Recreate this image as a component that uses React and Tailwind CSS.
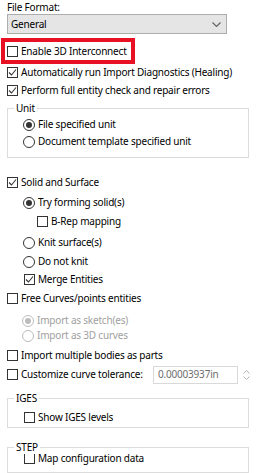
import React from 'react';

function Check({ checked }) {
  return (
    <span className="w-[11px] h-[11px] shrink-0 border border-[#333] bg-white flex items-center justify-center">
      {checked && (
        <svg width="9" height="9" viewBox="0 0 9 9">
          <polyline points="1,4.5 3.5,7 8,1.5" fill="none" stroke="#333" strokeWidth="1.1" />
        </svg>
      )}
    </span>
  );
}

function Radio({ checked, disabled }) {
  const c = disabled ? '#bcbcbc' : '#333';
  return (
    <svg width="12" height="12" viewBox="0 0 12 12" className="shrink-0">
      <circle cx="6" cy="6" r="5.5" fill="#fff" stroke={c} strokeWidth="1" />
      {checked && <circle cx="6" cy="6" r="3" fill={c} />}
    </svg>
  );
}

function Row({ className = '', children }) {
  return <div className={`h-[11px] flex items-center gap-[3px] whitespace-nowrap ${className}`}>{children}</div>;
}

function Group({ label, className = '', children }) {
  return (
    <div className={`relative ml-[7px] w-[242px] border border-[#dcdcdc] ${className}`}>
      <span className="absolute -top-[8px] left-[6px] bg-white px-[2px] leading-[14px]">{label}</span>
      {children}
    </div>
  );
}

export default function App() {
  return (
    <div
      className="w-[276px] h-[473px] bg-white overflow-hidden text-[10px] tracking-[-0.2px] text-black"
      style={{ fontFamily: '"Noto Sans", "Open Sans", sans-serif' }}
    >
      <div className="h-[14px] pl-[7px] leading-[14px]">File Format:</div>
      <div className="ml-[7px] w-[220px] h-[20px] bg-[#e5e5e5] border border-[#adadad] flex items-center justify-between pl-[3px] pr-[5px]">
        <span>General</span>
        <svg width="9" height="5" viewBox="0 0 9 5">
          <polyline points="0.5,0.5 4.5,4.5 8.5,0.5" fill="none" stroke="#606060" strokeWidth="1.1" />
        </svg>
      </div>

      <div className="mt-[4px] ml-[1px] w-[134px] h-[26px] border-4 border-[#e81123] flex items-center pl-[2px] gap-[3px] whitespace-nowrap">
        <Check />
        <span>Enable 3D Interconnect</span>
      </div>

      <Row className="mt-[3px] pl-[7px]">
        <Check checked />
        <span>Automatically run Import Diagnostics (Healing)</span>
      </Row>
      <Row className="mt-[7px] pl-[7px]">
        <Check checked />
        <span>Perform full entity check and repair errors</span>
      </Row>

      <Group label="Unit" className="mt-[12px] h-[50px] pt-[10px] pl-[15px]">
        <Row>
          <Radio checked />
          <span>File specified unit</span>
        </Row>
        <Row className="mt-[6px]">
          <Radio />
          <span>Document template specified unit</span>
        </Row>
      </Group>

      <Row className="mt-[19px] pl-[7px]">
        <Check checked />
        <span>Solid and Surface</span>
      </Row>
      <Row className="mt-[9px] pl-[23px]">
        <Radio checked />
        <span>Try forming solid(s)</span>
      </Row>
      <Row className="mt-[8px] pl-[37px]">
        <Check />
        <span>B-Rep mapping</span>
      </Row>
      <Row className="mt-[10px] pl-[23px]">
        <Radio />
        <span>Knit surface(s)</span>
      </Row>
      <Row className="mt-[8px] pl-[23px]">
        <Radio />
        <span>Do not knit</span>
      </Row>
      <Row className="mt-[7px] pl-[24px]">
        <Check checked />
        <span>Merge Entities</span>
      </Row>
      <Row className="mt-[8px] pl-[7px]">
        <Check />
        <span>Free Curves/points entities</span>
      </Row>
      <Row className="mt-[11px] pl-[22px] text-[#a0a0a0]">
        <Radio checked disabled />
        <span>Import as sketch(es)</span>
      </Row>
      <Row className="mt-[4px] pl-[22px] text-[#a0a0a0]">
        <Radio disabled />
        <span>Import as 3D curves</span>
      </Row>
      <Row className="mt-[9px] pl-[7px]">
        <Check />
        <span>Import multiple bodies as parts</span>
      </Row>
      <Row className="mt-[8px] pl-[7px]">
        <Check />
        <span className="w-[129px] shrink-0">Customize curve tolerance:</span>
        <div className="w-[85px] h-[18px] shrink-0 border border-[#d9d9d9] flex items-center pl-[4px] text-[#6d6d6d]">
          0.00003937in
        </div>
        <div className="flex flex-col gap-[2px] ml-[2px]">
          <svg width="7" height="4" viewBox="0 0 7 4">
            <polyline points="0.5,3.5 3.5,0.5 6.5,3.5" fill="none" stroke="#b5b5b5" strokeWidth="1" />
          </svg>
          <svg width="7" height="4" viewBox="0 0 7 4">
            <polyline points="0.5,0.5 3.5,3.5 6.5,0.5" fill="none" stroke="#b5b5b5" strokeWidth="1" />
          </svg>
        </div>
      </Row>

      <Group label="IGES" className="mt-[18px] h-[30px] pt-[13px] pl-[16px]">
        <Row>
          <Check />
          <span>Show IGES levels</span>
        </Row>
      </Group>

      <Group label="STEP" className="mt-[19px] h-[26px] pt-[5px] pl-[16px]">
        <Row>
          <Check />
          <span>Map configuration data</span>
        </Row>
      </Group>
    </div>
  );
}
